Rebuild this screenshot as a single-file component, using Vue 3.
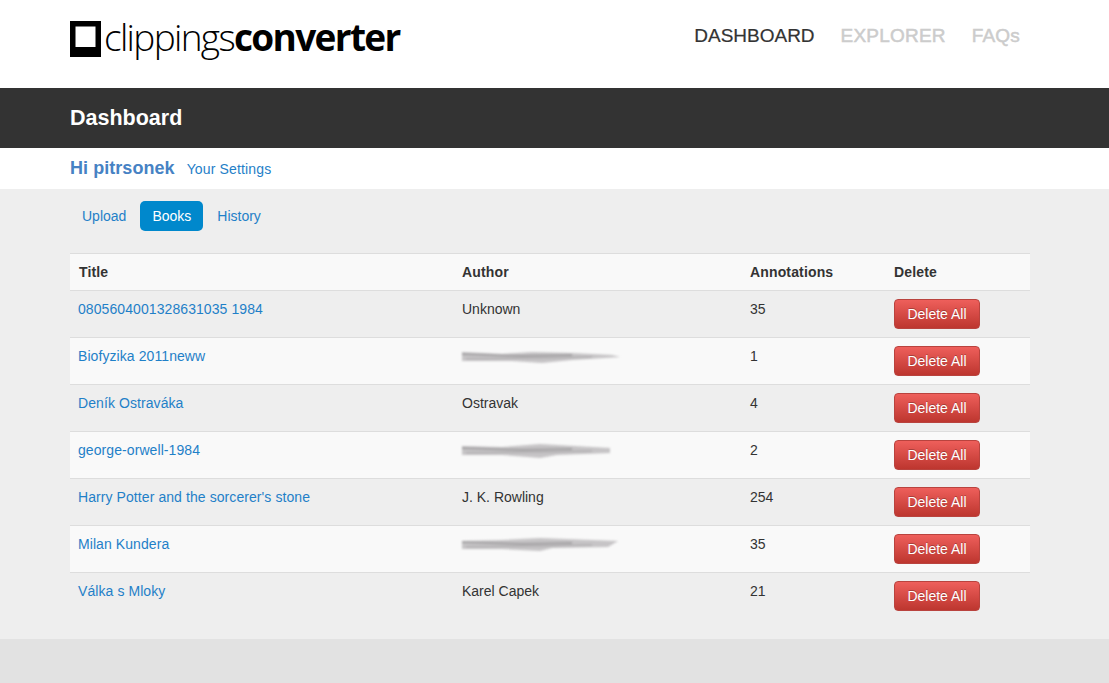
<script setup>
const books = [
  { title: '0805604001328631035 1984', author: 'Unknown', count: 35 },
  { title: 'Biofyzika 2011neww', smudge: 'M0 4 L40 6 L70 4 L110 5 L150 7 L158 9 L110 12 L80 15 L50 13 L0 13Z', count: 1 },
  { title: 'Deník Ostraváka', author: 'Ostravak', count: 4 },
  { title: 'george-orwell-1984', smudge: 'M0 4 L40 5 L78 2 L148 6 L148 11 L95 13 L78 16 L40 13 L0 13Z', count: 2 },
  { title: "Harry Potter and the sorcerer's stone", author: 'J. K. Rowling', count: 254 },
  { title: 'Milan Kundera', smudge: 'M0 5 L40 4 L78 2 L156 5 L146 11 L90 12 L78 15 L40 13 L0 13Z', count: 35 },
  { title: 'Válka s Mloky', author: 'Karel Capek', count: 21 }
]
</script>

<template>
  <div class="page">
    <header class="top">
      <div class="logo">
        <svg class="logo-mark" width="31" height="36" viewBox="0 0 31 36">
          <path fill-rule="evenodd" d="M0 0H31V36H0Z M5.5 5.5V26H25.5V5.5Z" fill="#000" />
        </svg>
        <span class="logo-text">clippings<b>converter</b></span>
      </div>
      <nav class="main-nav">
        <a class="active">DASHBOARD</a>
        <a>EXPLORER</a>
        <a>FAQs</a>
      </nav>
    </header>

    <div class="title-bar"><h1>Dashboard</h1></div>

    <div class="greeting">
      <strong>Hi pitrsonek</strong>
      <a>Your Settings</a>
    </div>

    <main class="content">
      <ul class="pills">
        <li>Upload</li>
        <li class="current">Books</li>
        <li>History</li>
      </ul>

      <table class="books">
        <thead>
          <tr>
            <th class="c-title">Title</th>
            <th class="c-author">Author</th>
            <th class="c-count">Annotations</th>
            <th>Delete</th>
          </tr>
        </thead>
        <tbody>
          <tr v-for="book in books" :key="book.title">
            <td class="title-cell"><a>{{ book.title }}</a></td>
            <td>
              <template v-if="book.author">{{ book.author }}</template>
              <svg v-else class="smudge" width="160" height="18" viewBox="0 0 160 18">
                <path :d="book.smudge" fill="#c6c4c6" />
                <path d="M0 6 L60 8 L110 7" stroke="#a4a2a4" stroke-width="2" fill="none" />
                <path d="M4 11 L70 10 L130 9" stroke="#b2b0b2" stroke-width="1.5" fill="none" />
              </svg>
            </td>
            <td>{{ book.count }}</td>
            <td><button class="btn-delete" type="button">Delete All</button></td>
          </tr>
        </tbody>
      </table>
    </main>

    <footer class="bottom"></footer>
  </div>
</template>

<style>
html, body {
  margin: 0;
  background: #e2e2e2;
}
</style>

<style scoped>
.page {
  font-family: "Liberation Sans", Arial, sans-serif;
  font-size: 14px;
  color: #333;
  height: 683px;
  display: flex;
  flex-direction: column;
  overflow: hidden;
}

.top {
  height: 88px;
  box-sizing: border-box;
  background: #fff;
  padding: 0 89px 0 70px;
  display: flex;
  justify-content: space-between;
  flex-shrink: 0;
}

.logo {
  display: flex;
  align-items: flex-start;
  padding-top: 21px;
}

.logo-mark {
  display: block;
  margin-right: 3px;
}

.logo-text {
  font-family: "Open Sans", sans-serif;
  font-size: 37px;
  font-weight: 300;
  line-height: 32px;
  letter-spacing: -1.67px;
  color: #000;
}

.logo-text b {
  font-weight: 700;
}

.main-nav {
  display: flex;
  gap: 26px;
  padding-top: 25px;
  font-size: 19px;
  line-height: 21px;
  font-weight: 400;
  letter-spacing: 0.2px;
  color: #ccc;
}

.main-nav a {
  -webkit-text-stroke: 0.5px currentColor;
}

.main-nav a.active {
  color: #333;
  letter-spacing: 0;
  -webkit-text-stroke: 0.2px currentColor;
}

.title-bar {
  height: 60px;
  box-sizing: border-box;
  background: #333;
  padding: 1px 0 0 70px;
  display: flex;
  align-items: center;
  flex-shrink: 0;
}

.title-bar h1 {
  margin: 0;
  font-size: 21.5px;
  font-weight: 700;
  color: #fff;
}

.greeting {
  height: 41px;
  box-sizing: border-box;
  background: #fff;
  padding: 10px 0 0 70px;
  display: flex;
  align-items: baseline;
  gap: 12px;
  flex-shrink: 0;
}

.greeting strong {
  font-size: 18px;
  letter-spacing: 0.05px;
  color: #4682c4;
}

.greeting a {
  letter-spacing: 0.15px;
  color: #1f80c8;
}

.content {
  flex: 1;
  background: #eee;
  padding: 12px 79px 0 70px;
}

.pills {
  list-style: none;
  margin: 0 0 22px;
  padding: 0;
  display: flex;
  gap: 2px;
  color: #1f80c8;
}

.pills li {
  padding: 0 12px;
  height: 30px;
  line-height: 30px;
  border-radius: 5px;
}

.pills li.current {
  background: #0088cc;
  color: #fff;
}

.books {
  width: 960px;
  table-layout: fixed;
  border-collapse: separate;
  border-spacing: 0;
}

.c-title { width: 384px; }
.c-author { width: 288px; }
.c-count { width: 144px; }

.books th {
  box-sizing: border-box;
  height: 38px;
  padding: 0 0 1px 8px;
  text-align: left;
  font-weight: 700;
  letter-spacing: 0.15px;
  background: #f9f9f9;
  border-top: 1px solid #ddd;
  border-bottom: 1px solid #ddd;
}

.books th.c-title {
  padding-left: 9px;
}

.books td {
  height: 47px;
  padding: 9px 0 0 8px;
  box-sizing: border-box;
  vertical-align: top;
  line-height: 18px;
  border-bottom: 1px solid #ddd;
}

.books tbody tr:last-child td {
  border-bottom: 0;
}

.books tbody tr:nth-child(even) td {
  background: #f9f9f9;
}

.books td.title-cell a {
  letter-spacing: 0.08px;
  color: #1f80c8;
}

.smudge {
  display: block;
  margin-top: 1px;
  filter: blur(1px);
}

.btn-delete {
  display: block;
  margin-top: -1px;
  width: 86px;
  height: 30px;
  padding: 0;
  font: 14px "Liberation Sans", Arial, sans-serif;
  color: #fff;
  background: linear-gradient(#ee5f5b, #bd362f);
  border: 1px solid #b9433e;
  border-radius: 4px;
  text-shadow: 0 -1px 0 rgba(0, 0, 0, 0.25);
}

.bottom {
  height: 44px;
  background: #e2e2e2;
  flex-shrink: 0;
}
</style>
